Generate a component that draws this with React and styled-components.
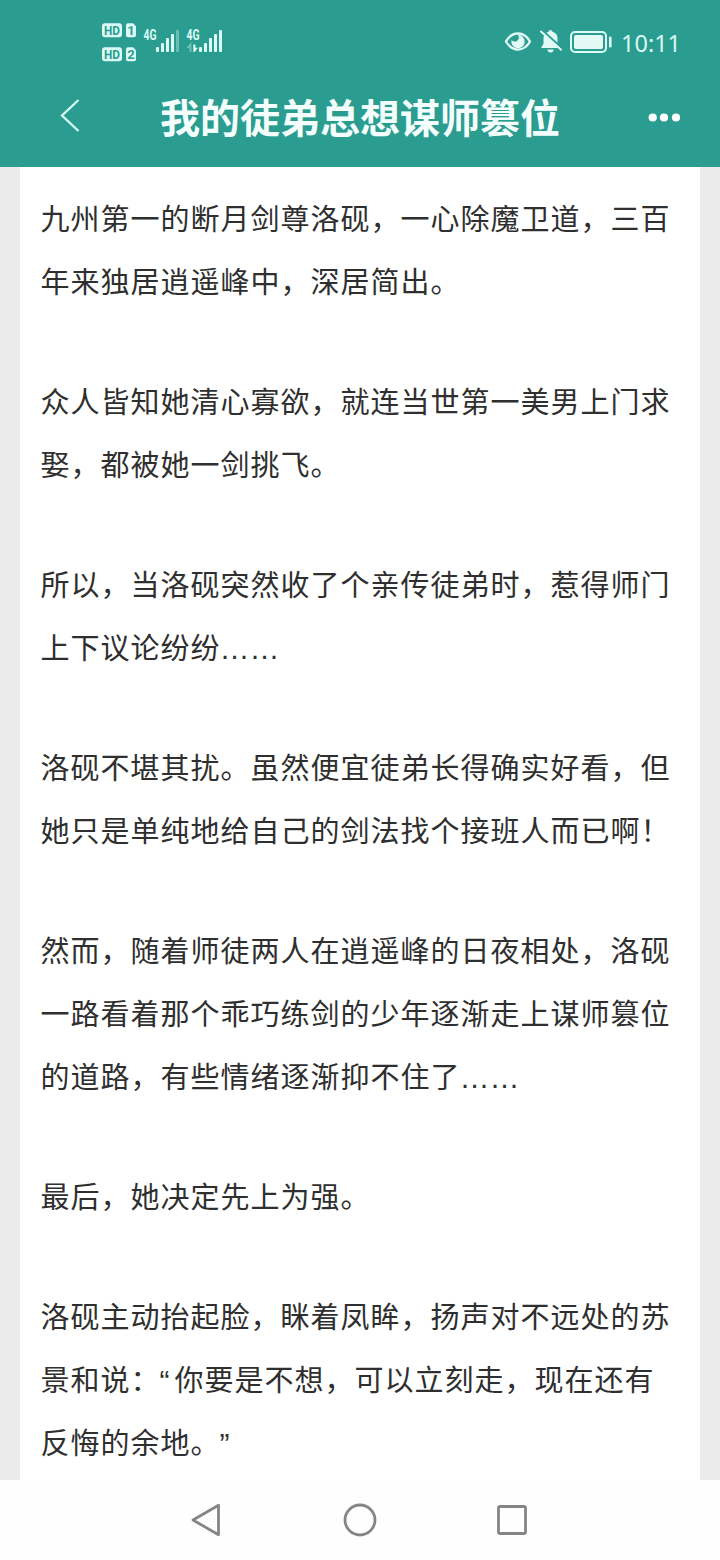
import React from 'react';
import styled, { createGlobalStyle } from 'styled-components';

const GlobalStyle = createGlobalStyle`
    body {
        margin: 0;
        background-color: #ebebeb;
        font-family: "Noto Sans CJK SC", sans-serif;
    }
`;

const Screen = styled.div`
    display: flex;
    flex-direction: column;
    width: 720px;
    height: 1560px;
    overflow: hidden;
`;

const Header = styled.header`
    flex: none;
    height: 167px;
    background-color: #2a9d90;
    color: #f4fffd;
`;

const StatusBar = styled.div`
    display: flex;
    justify-content: space-between;
    height: 84px;
    padding: 0 41px 0 100px;
`;

const StatusIcons = styled.div`
    display: flex;
    align-items: center;
`;

const Clock = styled.span`
    margin-left: 8px;
    padding-top: 2px;
    font-family: "Noto Sans", sans-serif;
    font-size: 23.5px;
    line-height: 84px;
    color: #dcf8f3;
    width: 58px;
    white-space: nowrap;
`;

const TitleBar = styled.div`
    display: flex;
    align-items: center;
    justify-content: space-between;
    height: 68px;
    padding: 0 38px 0 54px;
`;

const Title = styled.h1`
    margin: 0 6px 3px -6px;
    font-size: 40px;
    font-weight: 700;
    line-height: 65px;
    white-space: nowrap;
`;

const IconButton = styled.button`
    display: flex;
    padding: 0;
    border: 0;
    background: none;
    color: inherit;
`;

const Card = styled.main`
    flex: 1;
    min-height: 0;
    margin: 0 20px;
    padding: 19px 20px 0 20.5px;
    background-color: #fff;
    overflow: hidden;
`;

const Paragraph = styled.p`
    margin: 0 0 57px;
    color: #2f2f2f;
    font-size: 29px;
    letter-spacing: 1px;
    line-height: 63px;
`;

const Line = styled.span`
    display: block;
    height: 63px;
    white-space: nowrap;
`;

const Mark = styled.span`
    display: inline-block;
    width: ${({ $width }) => $width}px;
    font-family: "Liberation Sans", sans-serif;
    font-size: 30px;
    letter-spacing: 0;
    line-height: 1;
    text-indent: -1px;
`;

const NavBar = styled.nav`
    display: flex;
    flex: none;
    align-items: center;
    justify-content: space-between;
    height: 80px;
    padding: 0 188px;
    background-color: #fefefe;
`;

const paragraphs = [
    ['九州第一的断月剑尊洛砚，一心除魔卫道，三百', '年来独居逍遥峰中，深居简出。'],
    ['众人皆知她清心寡欲，就连当世第一美男上门求', '娶，都被她一剑挑飞。'],
    ['所以，当洛砚突然收了个亲传徒弟时，惹得师门', '上下议论纷纷……'],
    ['洛砚不堪其扰。虽然便宜徒弟长得确实好看，但', '她只是单纯地给自己的剑法找个接班人而已啊！'],
    [
        '然而，随着师徒两人在逍遥峰的日夜相处，洛砚',
        '一路看着那个乖巧练剑的少年逐渐走上谋师篡位',
        '的道路，有些情绪逐渐抑不住了……',
    ],
    ['最后，她决定先上为强。'],
    [
        '洛砚主动抬起脸，眯着凤眸，扬声对不远处的苏',
        '景和说：“你要是不想，可以立刻走，现在还有',
        '反悔的余地。”',
    ],
];

// quotes are half width and the ellipsis sits on the baseline
const renderLine = (line) =>
    line.split(/([“”…])/).map((part, i) => {
        if (part === '…') return <Mark key={i} $width={30}>{part}</Mark>;
        if (part === '“' || part === '”') return <Mark key={i} $width={14}>{part}</Mark>;
        return part;
    });

const bars = [5, 9, 14, 18, 22];

const SignalBars = ({ x, weak }) => (
    <g fill="#dcfbf6">
        {bars.map((h, i) => (
            <rect
                key={h}
                x={x + i * 5}
                y={52 - h}
                width="3"
                height={h}
                rx="1"
                opacity={weak && i === 4 ? 0.35 : 1}
            />
        ))}
    </g>
);

const SimBadge = ({ y, label }) => (
    <g>
        <rect x="2" y={y} width="20" height="14" rx="3" fill="#dcfbf6" />
        <path d={`M28 ${y}h5l3 3v9a2 2 0 0 1-2 2h-6a2 2 0 0 1-2-2v-10a2 2 0 0 1 2-2z`} fill="#dcfbf6" />
        <g fill="#2a9d90" fontFamily="Roboto, sans-serif" fontWeight="700" fontSize="13" textAnchor="middle">
            <text x="12" y={y + 11.6} textLength="16" lengthAdjust="spacingAndGlyphs">HD</text>
            <text x="31" y={y + 11.6}>{label}</text>
        </g>
    </g>
);

const Signals = () => (
    <svg width="130" height="84" viewBox="0 0 130 84">
        <SimBadge y={23.3} label="1" />
        <SimBadge y={47.2} label="2" />
        <g fill="#dcfbf6" fontFamily="Roboto, sans-serif" fontWeight="700" fontSize="14">
            <text x="43.5" y="40" textLength="13" lengthAdjust="spacingAndGlyphs">4G</text>
            <text x="86.5" y="40" textLength="13" lengthAdjust="spacingAndGlyphs">4G</text>
        </g>
        <SignalBars x={56} weak />
        <SignalBars x={99} />
        <path d="M87.500 48l3-3.500v7.500" fill="none" stroke="#dcfbf6" strokeWidth="1.800" opacity="0.4" />
        <path d="M93.300 44.500v7.500h1.400l3.300-4.200h-2.600v-3.300z" fill="#dcfbf6" />
    </svg>
);

const EyeIcon = () => (
    <svg width="28" height="24" viewBox="0 0 28 24">
        <path d="M2 11.500C8 .8 20 .8 26 11.500C20 22.200 8 22.200 2 11.500z" fill="none" stroke="#e1faf6" strokeWidth="2.300" />
        <path d="M14 4.800a6.700 6.700 0 1 1-6.500 5.200a3.800 3.800 0 0 0 6.500-5.200z" fill="#e1faf6" />
    </svg>
);

const BellSvg = styled.svg`
    margin: 0 6px 0 7px;
`;

const BellOffIcon = () => (
    <BellSvg width="24" height="26" viewBox="0 0 24 26">
        <path d="M11.500 1a2 2 0 0 1 2 1.700c3.200.8 5 3.300 5 6.600v5.500l2.500 4.200H2l2.500-4.200V9.300c0-3.300 1.800-5.800 5-6.600A2 2 0 0 1 11.500 1z" fill="#e1faf6" />
        <path d="M8.500 20.500h6a3 3 0 0 1-6 0z" fill="#e1faf6" />
        <path d="M2.500 .8L23.500 19.500" stroke="#2a9d90" strokeWidth="2.200" />
        <path d="M2 2.500L22 20.800" stroke="#e1faf6" strokeWidth="2" strokeLinecap="round" />
    </BellSvg>
);

const BatteryIcon = () => (
    <svg width="44" height="24" viewBox="0 0 44 24">
        <rect x="2" y="2" width="35" height="20" rx="4" fill="none" stroke="#dcfbf6" strokeWidth="2" />
        <rect x="5" y="5" width="29" height="14" rx="2" fill="#e4f8f4" />
        <rect x="40" y="6.500" width="2.600" height="11" rx="1.300" fill="#dcfbf6" />
    </svg>
);

const BackIcon = () => (
    <svg width="32" height="40" viewBox="0 0 32 40">
        <path d="M24.500 2L8 17.500L24.500 33" fill="none" stroke="#d8fff8" strokeWidth="2.300" />
    </svg>
);

const MoreIcon = () => (
    <svg width="36" height="12" viewBox="0 0 36 12" fill="#fff">
        <circle cx="6.700" cy="5.500" r="4.100" />
        <circle cx="18" cy="5.500" r="4.100" />
        <circle cx="30" cy="5.500" r="4.100" />
    </svg>
);

const App = () => {
    return (
        <Screen lang="zh-CN">
            <GlobalStyle />
            <Header>
                <StatusBar>
                    <Signals />
                    <StatusIcons>
                        <EyeIcon />
                        <BellOffIcon />
                        <BatteryIcon />
                        <Clock>10:11</Clock>
                    </StatusIcons>
                </StatusBar>
                <TitleBar>
                    <IconButton type="button">
                        <BackIcon />
                    </IconButton>
                    <Title>我的徒弟总想谋师篡位</Title>
                    <IconButton type="button">
                        <MoreIcon />
                    </IconButton>
                </TitleBar>
            </Header>
            <Card>
                {paragraphs.map((lines) => (
                    <Paragraph key={lines[0]}>
                        {lines.map((line) => (
                            <Line key={line}>{renderLine(line)}</Line>
                        ))}
                    </Paragraph>
                ))}
            </Card>
            <NavBar>
                <svg width="36" height="40" viewBox="0 0 36 40">
                    <path d="M5 20L30.500 5.200V34.800z" fill="none" stroke="#858585" strokeWidth="2.800" strokeLinejoin="round" />
                </svg>
                <svg width="36" height="40" viewBox="0 0 36 40">
                    <circle cx="18" cy="20" r="15" fill="none" stroke="#858585" strokeWidth="2.800" />
                </svg>
                <svg width="36" height="40" viewBox="0 0 36 40">
                    <rect x="2.500" y="6.500" width="27" height="27" rx="1.500" fill="none" stroke="#858585" strokeWidth="2.800" />
                </svg>
            </NavBar>
        </Screen>
    );
};

export default App;
